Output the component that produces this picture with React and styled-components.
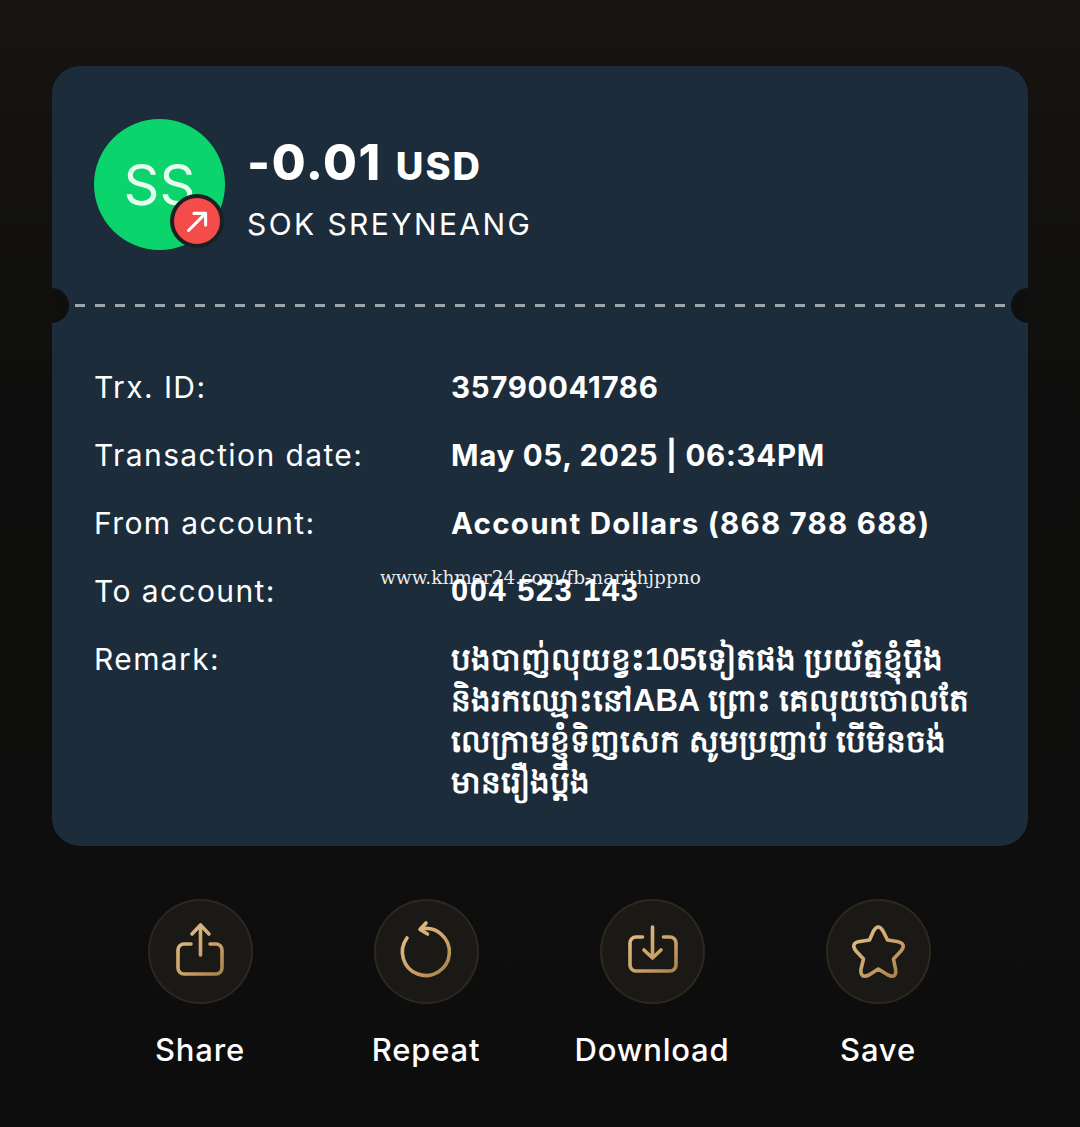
import styled, { createGlobalStyle } from "styled-components";

const GlobalStyle = createGlobalStyle`
  html, body {
    margin: 0;
    padding: 0;
    background: #0e0e0d;
  }
  * { box-sizing: border-box; }
`;

const rows = [
  { label: "Trx. ID:", value: "35790041786", spacing: 0.65 },
  { label: "Transaction date:", value: "May 05, 2025 | 06:34PM", spacing: 0.72 },
  { label: "From account:", value: "Account Dollars (868 788 688)", spacing: 1.25 },
  { label: "To account:", value: "004 523 143", spacing: 1.45, plain: true },
];

const remark = [
  "បងបាញ់លុយខ្វះ105ទៀតផង ប្រយ័ត្នខ្ញុំប្ដឹង",
  "និងរកឈ្មោះនៅABA ព្រោះ គេលុយចោលតែ",
  "លេក្រាមខ្ញុំទិញសេក សូមប្រញាប់ បើមិនចង់",
  "មានរឿងប្ដឹង",
];

function GoldIcon({ id, children }) {
  return (
    <svg width="104" height="104" viewBox="0 0 104 104" fill="none" stroke={`url(#${id})`} strokeWidth="3.6" strokeLinecap="round" strokeLinejoin="round">
      <defs>
        <linearGradient id={id} gradientUnits="userSpaceOnUse" x1="30" y1="26" x2="74" y2="78">
          <stop offset="0" stopColor="#e3c08a" />
          <stop offset="0.6" stopColor="#c9a066" />
          <stop offset="1" stopColor="#a57f4a" />
        </linearGradient>
      </defs>
      {children}
    </svg>
  );
}

const actions = [
  {
    name: "Share",
    icon: (
      <GoldIcon id="goldShare">
        <path d="M43 45H36a6 6 0 0 0-6 6V69a6 6 0 0 0 6 6H68a6 6 0 0 0 6-6V51a6 6 0 0 0-6-6H62" />
        <path d="M52.5 26V56M44 35L52.5 26L61 35" />
      </GoldIcon>
    ),
  },
  {
    name: "Repeat",
    icon: (
      <GoldIcon id="goldRepeat">
        <path d="M47 30A23.5 23.5 0 1 1 33 39" />
        <path d="M52 24L46 30.5L53.5 35" />
      </GoldIcon>
    ),
  },
  {
    name: "Download",
    icon: (
      <GoldIcon id="goldDownload">
        <path d="M42.5 38H36a6 6 0 0 0-6 6V66a6 6 0 0 0 6 6H70a6 6 0 0 0 6-6V44a6 6 0 0 0-6-6H63.5" />
        <path d="M52.5 28V59M44 51L52.5 59L61 51" />
      </GoldIcon>
    ),
  },
  {
    name: "Save",
    icon: (
      <GoldIcon id="goldSave">
        <path d="M47.5 32Q52.3 24 57 32L61.5 41L71 42.5Q81 44.5 75 52L67.5 60L69.5 70Q71 80 62 76L52.3 70L43 76Q34 80 35 70L37.5 60L30 52Q24 44 34 42.5L43.5 41Z" />
      </GoldIcon>
    ),
  },
];

export default function App() {
  return (
    <Page>
      <GlobalStyle />
      <Card>
        <Header>
          <Avatar>
            SS
            <Badge>
              <svg width="27" height="27" viewBox="0 0 30 30" fill="none" stroke="#fff" strokeWidth="3.4" strokeLinecap="round" strokeLinejoin="round">
                <path d="M5 25L24 6M11 6H24V19" />
              </svg>
            </Badge>
          </Avatar>
          <HeaderText>
            <Amount>-0.01<Currency>USD</Currency></Amount>
            <Name>SOK SREYNEANG</Name>
          </HeaderText>
        </Header>
        <Divider>
          <Notch $side="left" />
          <Dashes />
          <Notch $side="right" />
        </Divider>
        <Details>
          {rows.map((row) => (
            <Row key={row.label}>
              <Label>{row.label}</Label>
              <Value $plain={row.plain} $spacing={row.spacing}>{row.value}</Value>
            </Row>
          ))}
          <Row>
            <Label>Remark:</Label>
            <RemarkText>
              {remark.map((line) => (
                <div key={line}>{line}</div>
              ))}
            </RemarkText>
          </Row>
          <Watermark>www.khmer24.com/fb-narithjppno</Watermark>
        </Details>
      </Card>
      <Actions>
        {actions.map((action) => (
          <Action key={action.name}>
            <ActionCircle>{action.icon}</ActionCircle>
            <ActionLabel>{action.name}</ActionLabel>
          </Action>
        ))}
      </Actions>
    </Page>
  );
}

const Page = styled.div`
  width: 1080px;
  height: 1127px;
  overflow: hidden;
  padding: 66px 52px 0;
  background: linear-gradient(180deg, #171412 0%, #12110f 18%, #0f0f0e 32%, #0d0d0d 100%);
  font-family: Inter, "Noto Sans", sans-serif;
  color: #fff;
`;

const Card = styled.div`
  width: 976px;
  height: 780px;
  border-radius: 28px;
  background: #1c2c3a;
  display: flex;
  flex-direction: column;
  overflow: hidden;
`;

const Header = styled.div`
  height: 222px;
  padding: 53px 42px 0;
  display: flex;
  align-items: flex-start;
  gap: 22px;
`;

const Avatar = styled.div`
  position: relative;
  width: 131px;
  height: 131px;
  flex: none;
  border-radius: 50%;
  background: #0bd46c;
  color: #e6fcef;
  font-size: 56px;
  font-weight: 400;
  display: flex;
  align-items: center;
  justify-content: center;
`;

const Badge = styled.div`
  position: absolute;
  right: 1px;
  bottom: 2px;
  width: 54px;
  height: 54px;
  border-radius: 50%;
  background: #f44b4b;
  border: 4px solid #1b2023;
  display: flex;
  align-items: center;
  justify-content: center;
`;

const HeaderText = styled.div`
  display: flex;
  flex-direction: column;
  padding-top: 14px;
`;

const Amount = styled.div`
  font-size: 49px;
  font-weight: 800;
  line-height: 60px;
  letter-spacing: 1.6px;
  white-space: nowrap;
`;

const Currency = styled.span`
  font-size: 38px;
  letter-spacing: 2px;
  margin-left: 14px;
`;

const Name = styled.div`
  font-size: 30px;
  font-weight: 400;
  line-height: 36px;
  margin-top: 10px;
  letter-spacing: 2.4px;
`;

const Divider = styled.div`
  position: relative;
  height: 35px;
  display: flex;
  align-items: center;
  justify-content: center;
`;

const Dashes = styled.div`
  width: 930px;
  height: 3px;
  background: repeating-linear-gradient(90deg, #9ea6ac 0 10px, transparent 10px 20px);
`;

const Notch = styled.div`
  position: absolute;
  top: 0;
  ${(p) => p.$side}: -18px;
  width: 35px;
  height: 35px;
  border-radius: 50%;
  background: #0f0f0e;
`;

const Details = styled.div`
  position: relative;
  padding: 44px 42px 0;
  display: flex;
  flex-direction: column;
  gap: 28px;
`;

const Row = styled.div`
  display: grid;
  grid-template-columns: 357px 1fr;
  align-items: start;
`;

const Label = styled.div`
  font-size: 30px;
  line-height: 40px;
  font-weight: 400;
  letter-spacing: 1.4px;
`;

const Value = styled.div`
  font-size: ${(p) => (p.$plain ? "31px" : "29.5px")};
  line-height: 40px;
  white-space: nowrap;
  font-family: ${(p) => (p.$plain ? `"Liberation Sans", sans-serif` : "inherit")};
  font-weight: 700;
  letter-spacing: ${(p) => p.$spacing}px;
`;

const RemarkText = styled.div`
  font-family: "Liberation Sans", "Noto Sans", sans-serif;
  font-size: 31px;
  line-height: 41px;
  font-weight: 700;
  white-space: nowrap;
`;

const Watermark = styled.div`
  position: absolute;
  left: 328px;
  top: 245px;
  font-family: "DejaVu Serif", serif;
  font-size: 18.5px;
  line-height: 20px;
  color: rgba(255, 255, 255, 0.92);
  white-space: nowrap;
`;

const Actions = styled.div`
  width: 904px;
  margin: 53px 0 0 35px;
  display: grid;
  grid-template-columns: repeat(4, 226px);
`;

const Action = styled.div`
  display: flex;
  flex-direction: column;
  align-items: center;
  gap: 25px;
`;

const ActionCircle = styled.div`
  width: 105px;
  height: 105px;
  border-radius: 50%;
  background: #1b1916;
  box-shadow: inset 0 0 0 2px #2d271e;
`;

const ActionLabel = styled.div`
  font-size: 31px;
  line-height: 41px;
  font-weight: 500;
  letter-spacing: 0.8px;
  white-space: nowrap;
`;
